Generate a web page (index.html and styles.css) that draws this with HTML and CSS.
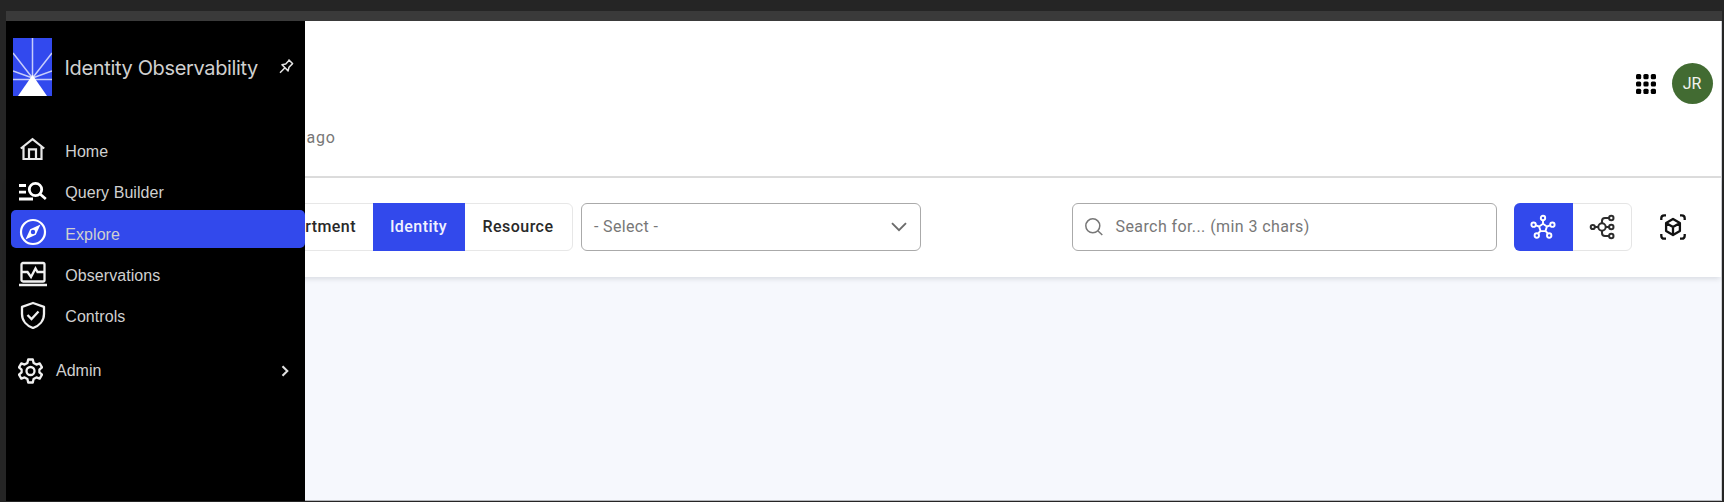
FILE: index.html
```html
<!DOCTYPE html>
<html lang="en">
<head>
<meta charset="utf-8">
<title>Identity Observability</title>
<link rel="stylesheet" href="styles.css">
</head>
<body>
<div class="window">
  <aside class="sidebar">
    <div class="brand">
      <svg class="logo" width="39" height="58" viewBox="0 0 39 58"><rect width="39" height="58" fill="#3249ee"/><path d="M19.500 40V0M19.500 40 0 15M19.500 40 39 15M19.500 40 0 33M19.500 40 39 33M0 41.500H39" stroke="#c7cdfb" stroke-width="1.500" fill="none"/><path d="M19.500 37 34 58H5Z" fill="#fff"/></svg>
      <span class="brand-name">Identity Observability</span>
      <svg class="pin" width="16" height="16" viewBox="0 0 16 16" fill="none" stroke="#e4e4e4" stroke-width="1.500" stroke-linejoin="round"><path d="M9.500 1.500 14 6M10.200 2.200 6.700 5.900 3 6.800 9.100 12.900 10 9.200 13.600 5.600M6 9.800 1 14.800"/></svg>
    </div>
    <nav class="nav">
      <a class="item"><svg class="icon" width="28" height="28" viewBox="0 0 28 28" fill="none" stroke="#e8e8e8" stroke-width="2.200"><path d="M1.800 12.500 13.500 3.200 25.200 12.500M4.500 10.500V23H22.500V10.500M10 23V13.300H17V23"/></svg><span>Home</span></a>
      <a class="item"><svg class="icon" width="28" height="28" viewBox="0 0 28 28" fill="none" stroke="#fff" stroke-width="2.800"><path d="M0 8.500H7M0 15.100H7M0 22H14"/><circle cx="16.500" cy="12.500" r="6.200"/><path d="m21 17 5.800 5"/></svg><span>Query Builder</span></a>
      <a class="item active"><svg class="icon" width="28" height="28" viewBox="0 0 28 28"><circle cx="14" cy="14" r="12" fill="none" stroke="#fff" stroke-width="2.200"/><path fill="#fff" fill-rule="evenodd" d="M21.500 6.500 16.800 16.800 6.500 21.500 11.200 11.200ZM14 11.800a2.200 2.200 0 1 0 0 4.400 2.200 2.200 0 0 0 0-4.400Z"/></svg><span>Explore</span></a>
      <a class="item"><svg class="icon" width="28" height="28" viewBox="0 0 28 28" fill="none" stroke="#f0f0f0" stroke-width="2.300"><rect x="2.500" y="3" width="23" height="18.500" rx="1.500"/><path d="M0 25H28M3 12H8.500L12 17 16.500 8.500 18.500 12H25"/></svg><span>Observations</span></a>
      <a class="item"><svg class="icon" width="28" height="28" viewBox="0 0 28 28" fill="none" stroke="#f0f0f0" stroke-width="2.300"><path d="M14 2 25 5.800V13C25 20 20 25 14 27 8 25 3 20 3 13V5.800Z" stroke-linejoin="round"/><path d="m8.500 14 4 4 7-7.500"/></svg><span>Controls</span></a>
    </nav>
    <a class="admin">
      <svg width="25" height="26" viewBox="0 0 25 26" fill="none" stroke="#f0f0f0" stroke-width="2.300" stroke-linejoin="round"><path d="M10.200 1.500H14.800L15.600 5 18.400 6.600 21.700 5.400 24 9.300 21.400 11.700V14.300L24 16.700 21.700 20.600 18.400 19.400 15.600 21 14.800 24.500H10.200L9.400 21 6.600 19.400 3.300 20.600 1 16.700 3.600 14.300V11.700L1 9.300 3.300 5.400 6.600 6.600 9.400 5Z"/><circle cx="12.500" cy="13" r="4"/></svg>
      <span>Admin</span>
      <svg class="arrow" width="8" height="12" viewBox="0 0 8 12" fill="none" stroke="#e0e0e0" stroke-width="2.100"><path d="M1.500 1.200 6.300 6 1.500 10.800"/></svg>
    </a>
  </aside>
  <main class="main">
    <header class="header">
      <span class="updated">ago</span>
      <div class="account">
        <svg width="20" height="20" viewBox="0 0 20 20"><g fill="#000"><rect width="5.200" height="5.200" rx="1.500"/><rect x="7.400" width="5.200" height="5.200" rx="1.500"/><rect x="14.800" width="5.200" height="5.200" rx="1.500"/><rect y="7.400" width="5.200" height="5.200" rx="1.500"/><rect x="7.400" y="7.400" width="5.200" height="5.200" rx="1.500"/><rect x="14.800" y="7.400" width="5.200" height="5.200" rx="1.500"/><rect y="14.800" width="5.200" height="5.200" rx="1.500"/><rect x="7.400" y="14.800" width="5.200" height="5.200" rx="1.500"/><rect x="14.800" y="14.800" width="5.200" height="5.200" rx="1.500"/></g></svg>
        <span class="avatar">JR</span>
      </div>
    </header>
    <section class="toolbar">
      <div class="tabs"><button class="tab department">Department</button><button class="tab selected">Identity</button><button class="tab resource">Resource</button></div>
      <div class="select"><span>- Select -</span><svg width="16" height="10" viewBox="0 0 16 10" fill="none" stroke="#6b6b6b" stroke-width="1.900"><path d="m1 1.200 7 7 7-7"/></svg></div>
      <div class="search"><svg width="18" height="18" viewBox="0 0 18 18" fill="none" stroke="#777" stroke-width="1.500"><circle cx="7.800" cy="7.800" r="7"/><path d="m12.800 12.800 4.500 4.200"/></svg><span>Search for... (min 3 chars)</span></div>
      <div class="views">
        <button class="view on"><svg width="26" height="26" viewBox="0 0 26 26" fill="none" stroke="#fff" stroke-width="1.900"><path d="m13 9.800 3.900 2.800-1.500 4.500h-4.800l-1.500-4.500ZM13 6.200V9.500M17 12.500 20 11.400M9 12.500 6 11.400M10.400 17 8.300 19.400M15.600 17 17.700 19.400"/><circle cx="13" cy="4" r="2.200"/><circle cx="22.400" cy="10.700" r="2.200"/><circle cx="3.600" cy="10.700" r="2.200"/><circle cx="6.800" cy="21.500" r="2.200"/><circle cx="19.200" cy="21.500" r="2.200"/></svg></button>
        <button class="view"><svg width="26" height="26" viewBox="0 0 26 26" fill="none" stroke="#2c2c2c" stroke-width="2"><circle cx="3.800" cy="13" r="2.100"/><circle cx="13" cy="13" r="3.700"/><circle cx="22.300" cy="4" r="2.200"/><circle cx="22.300" cy="13" r="2.200"/><circle cx="22.300" cy="22" r="2.200"/><path d="M5.600 13H9.200M16.800 13H20M13 9.200V7Q13 4 16 4H20M13 16.800V19Q13 22 16 22H20"/></svg></button>
      </div>
      <svg class="focus" width="26" height="26" viewBox="0 0 26 26" fill="none" stroke="#111" stroke-width="2.300" stroke-linejoin="round"><path d="M6 1.300H4.300Q1.300 1.300 1.300 4.300V6M20 1.300H21.700Q24.700 1.300 24.700 4.300V6M1.300 20V21.700Q1.300 24.700 4.300 24.700H6M24.700 20V21.700Q24.700 24.700 21.700 24.700H20M13 5 19.900 9V17L13 21 6.100 17V9ZM6.100 9 13 13 19.900 9M13 13V21"/></svg>
    </section>
    <div class="canvas"></div>
  </main>
</div>
</body>
</html>
```
FILE: styles.css
```css
* { box-sizing: border-box; }
body { margin: 0; height: 502px; overflow: hidden; background: #252525; font-family: Roboto, sans-serif; }
button { font: inherit; border: 0; padding: 0; }
svg { display: block; flex: none; }
.window { position: relative; margin: 11px 2px 1px 6px; height: 490px; border-top: 10px solid #3a3a3a; }
.sidebar { position: absolute; z-index: 1; left: 0; top: 0; bottom: 0; width: 298.500px; background: #000; color: #d0d0d0; font: 16px/20px "Liberation Sans", Arial, sans-serif; }
.brand { display: flex; align-items: flex-start; height: 106px; padding: 17px 0 0 7px; }
.brand-name { width: 194px; margin: 18px 0 0 12.500px; font: 20px/24px Inter, sans-serif; letter-spacing: -.35px; white-space: nowrap; }
.pin { margin: 20px 0 0 20.500px; }
.nav { display: flex; flex-direction: column; gap: 2.600px; padding: 0 0 0 5px; }
.item { display: flex; align-items: center; height: 38.700px; padding: 7px 0 0 8px; border-radius: 5px; }
.item span { margin: 4.500px 0 0 18.300px; letter-spacing: .06px; }
.active { background: #3249ec; }
.admin { display: flex; align-items: center; height: 40px; margin: 20px 16px 0 12px; }
.admin span { margin-left: 13px; }
.arrow { margin-left: auto; }
.main { display: flex; flex-direction: column; height: 480px; background: #fff; border-right: 1px solid #cfd1d5; border-bottom: 1px solid #b5b7bb; }
.header { display: flex; justify-content: space-between; height: 157px; padding: 41.500px 8.500px 0 300.500px; border-bottom: 2px solid #dcdcdc; }
.updated { padding-top: 65.500px; color: #777; font-size: 16px; line-height: 20px; letter-spacing: .8px; }
.account { display: flex; align-items: center; gap: 16px; height: 42px; }
.avatar { width: 41px; height: 41px; border-radius: 50%; background: #426b32; color: #f2f4ef; font-size: 16px; line-height: 41px; text-align: center; }
.toolbar { position: relative; display: flex; align-items: center; height: 99px; padding: 0 35.500px 2px 243.500px; background: #fff; box-shadow: 0 3px 5px -1px rgba(30,35,50,.13); }
.tabs { display: flex; width: 323px; height: 48px; border: 1px solid #e7e7e7; border-radius: 6px; }
.tab { background: transparent; color: #292929; font-size: 16px; font-weight: 500; letter-spacing: .45px; }
.department { width: 122px; padding-right: 16.500px; text-align: right; }
.tab.selected { width: 92px; margin: -1px 0; background: #3249ec; color: #f0f1ff; }
.resource { width: 107px; }
.select, .search { display: flex; align-items: center; height: 48px; border: 1px solid #aaa; border-radius: 6px; color: #777; font-size: 16px; }
.select { width: 340px; margin-left: 8px; padding: 0 12.500px; justify-content: space-between; letter-spacing: .35px; }
.search { width: 425px; margin-left: 151px; padding-left: 12px; gap: 13px; letter-spacing: .41px; }
.views { display: flex; width: 118px; height: 48px; margin-left: 17px; border: 1px solid #e5e5e5; border-radius: 6px; }
.view { display: grid; place-items: center; width: 58px; background: transparent; }
.on { width: 59px; margin: -1px 0 -1px -1px; background: #3249ec; border-radius: 6px 0 0 6px; }
.focus { margin-left: auto; }
.canvas { flex: 1; background: #f6f8fd; }
```
